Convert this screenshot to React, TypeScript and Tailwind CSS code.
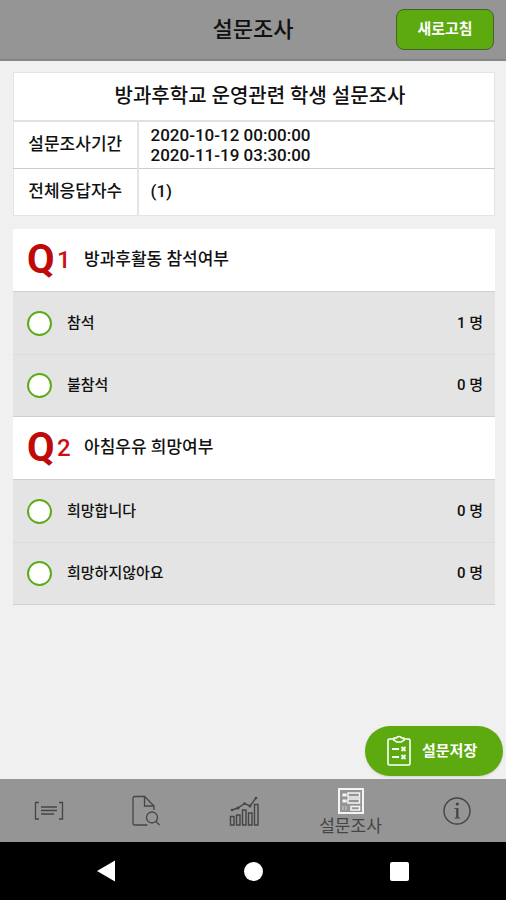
import React, { useState } from 'react';

interface Option {
  label: string;
  count: number;
}

interface Question {
  id: number;
  title: string;
  options: Option[];
}

const questions: Question[] = [
  {
    id: 1,
    title: '방과후활동 참석여부',
    options: [
      { label: '참석', count: 1 },
      { label: '불참석', count: 0 },
    ],
  },
  {
    id: 2,
    title: '아침우유 희망여부',
    options: [
      { label: '희망합니다', count: 0 },
      { label: '희망하지않아요', count: 0 },
    ],
  },
];

function ListIcon() {
  return (
    <svg viewBox="0 0 30 30" className="h-[30px] w-[30px]" fill="none" stroke="currentColor" strokeWidth="1.3">
      <path d="M5 6.500H1.500v16.500H5M25 6.500h3.500v16.500H25" />
      <path d="M7 11h16M7 14.500h16M7 18h13" />
    </svg>
  );
}

function FileSearchIcon() {
  return (
    <svg viewBox="0 0 30 32" className="h-8 w-[30px]" fill="none" stroke="currentColor" strokeWidth="1.3">
      <path d="M16.500 30H3.500a1.500 1.500 0 0 1-1.500-1.500V3A1.500 1.500 0 0 1 3.500 1.500h10L23 11v4" />
      <path d="M13.500 1.500V11H23" />
      <circle cx="21" cy="22.500" r="5.500" />
      <path d="M25 26.500L28.500 30" />
    </svg>
  );
}

function ChartIcon() {
  return (
    <svg viewBox="0 0 30 30" className="h-[30px] w-[30px]" fill="none" stroke="currentColor" strokeWidth="1.4">
      <path d="M1.500 20.500h3.500V29H1.500zM7.500 19H11v10H7.500zM13.500 14H17v15h-3.500zM19.500 17H23v12h-3.500zM25.500 8.500H29V29h-3.500z" />
      <path d="M3 14l6-2 6.500-4.500L21 10l6-8" />
      <g fill="currentColor" stroke="none">
        <circle cx="3" cy="14" r="1.300" />
        <circle cx="9" cy="12" r="1.500" />
        <circle cx="15.500" cy="7.500" r="1.300" />
        <circle cx="21" cy="10" r="1.500" />
        <circle cx="27" cy="2" r="1.300" />
      </g>
    </svg>
  );
}

function SurveyIcon() {
  return (
    <svg viewBox="0 0 26 26" className="h-[26px] w-[26px]" fill="none" stroke="#f4f4f4">
      <path d="M1 1h24v24H1z" strokeWidth="2" />
      <path d="M10 5h11.500v4H10zM10 11h11.500v4H10zM13 18.500h8.500V22H13z" strokeWidth="1.500" />
      <path d="M4.500 7h4M4.500 13h4" strokeWidth="3" />
      <path d="M10 7H8M10 13H8M5 18v4M8 18v4" strokeWidth="1" opacity="0.6" />
    </svg>
  );
}

function InfoIcon() {
  return (
    <svg viewBox="0 0 30 30" className="h-[30px] w-[30px]" fill="none" stroke="currentColor">
      <circle cx="15" cy="15" r="13" strokeWidth="1.400" />
      <path d="M12.500 12.500h3V22M12.500 22h5.500" strokeWidth="1.200" />
      <path d="M15.300 12v10" strokeWidth="2.200" />
      <circle cx="15.300" cy="8" r="1.600" fill="currentColor" stroke="none" />
    </svg>
  );
}

function ClipboardIcon() {
  return (
    <svg viewBox="0 0 26 32" className="h-8 w-[26px]" fill="none" stroke="white" strokeWidth="1.600" strokeLinejoin="round">
      <path d="M8 4H3.500A1.500 1.500 0 0 0 2 5.500v23A1.500 1.500 0 0 0 3.500 30h19a1.500 1.500 0 0 0 1.500-1.500v-23A1.500 1.500 0 0 0 22.500 4H18" />
      <path d="M8 3h2.500C11 1.500 12 1.500 13 1.500s2 0 2.500 1.500H18v2.500c-1 0-2 .5-2.500 1.500h-5C10 6 9 5.500 8 5.500z" />
      <path d="M6 14h7M6 22h7" strokeWidth="1.800" />
      <path d="M15.500 12l4 4M19.500 12l-4 4M15.500 20l4 4M19.500 20l-4 4" strokeWidth="1.800" />
    </svg>
  );
}

const tabs = [
  { name: '목록', icon: <ListIcon /> },
  { name: '검색', icon: <FileSearchIcon /> },
  { name: '통계', icon: <ChartIcon /> },
  { name: '설문조사', icon: <SurveyIcon /> },
  { name: '정보', icon: <InfoIcon /> },
];

function QuestionBlock({ question }: { question: Question }) {
  const [selected, setSelected] = useState('');

  return (
    <fieldset>
      <legend className="flex h-[63px] w-full items-center border-b border-[#cfcfcf] bg-white pl-[14px]">
        <span className="w-[30px] text-[40px] leading-none font-bold text-[#c00a0a]">Q</span>
        <span className="w-[27px] text-[24px] font-medium text-[#cc1010]">{question.id}</span>
        <span className="text-[17px] font-medium">{question.title}</span>
      </legend>
      {question.options.map((option) => (
        <label
          key={option.label}
          className="flex h-[63px] items-center border-b border-[#dcdcdc] bg-[#e4e4e4] pr-3 pl-[14px] text-[15px] font-medium last:h-[62px] last:border-[#cfcfcf]"
        >
          <input
            type="radio"
            name={`question-${question.id}`}
            value={option.label}
            checked={selected === option.label}
            onChange={(e) => setSelected(e.target.value)}
            className="mr-[15px] h-[25px] w-[25px] appearance-none rounded-full border-2 border-[#5bab1c] bg-white checked:bg-[#5bab1c]"
          />
          <span className="flex-1">{option.label}</span>
          <span>{option.count} 명</span>
        </label>
      ))}
    </fieldset>
  );
}

export default function App() {
  const [activeTab, setActiveTab] = useState('설문조사');

  return (
    <div className="flex min-h-screen flex-col bg-[#f0f0f0] font-[Roboto,'Noto_Sans_CJK_KR',sans-serif] text-[#111]">
      <header className="grid h-[61px] grid-cols-[1fr_auto_1fr] items-center border-b-2 border-[#858585] bg-[#959595] px-3">
        <h1 className="col-start-2 text-[22px] font-medium">설문조사</h1>
        <button
          type="button"
          className="h-[41px] w-[98px] justify-self-end rounded-lg border border-[#44622a] bg-[#5daa10] text-[15px] font-bold text-white"
        >
          새로고침
        </button>
      </header>

      <main className="relative flex flex-1 flex-col gap-[13px] pt-[11px] pr-[11px] pb-20 pl-[13px]">
        <table className="w-full border-collapse border border-[#e4e4e4] bg-white text-[17px]">
          <tbody>
            <tr className="h-12 border-b-2 border-[#e0e0e0]">
              <th colSpan={2} className="pl-3 text-[20px] font-medium">
                방과후학교 운영관련 학생 설문조사
              </th>
            </tr>
            <tr className="h-12 border-b border-[#cccccc]">
              <th className="w-[124px] border-r-2 border-[#e4e4e4] font-medium">설문조사기간</th>
              <td className="pl-3 leading-5 font-medium">
                2020-10-12 00:00:00
                <br />
                2020-11-19 03:30:00
              </td>
            </tr>
            <tr className="h-[47px]">
              <th className="border-r-2 border-[#e4e4e4] font-medium">전체응답자수</th>
              <td className="pl-3 font-medium">(1)</td>
            </tr>
          </tbody>
        </table>

        <form>
          {questions.map((question) => (
            <QuestionBlock key={question.id} question={question} />
          ))}
        </form>

        <button
          type="button"
          className="absolute right-[3px] bottom-[3px] flex h-[50px] w-[138px] items-center gap-[10px] rounded-full bg-[#5daa10] pl-[21px] text-[15px] font-bold text-white shadow"
        >
          <ClipboardIcon />
          설문저장
        </button>
      </main>

      <nav className="flex h-[63px] bg-[#959595] text-[#454545]">
        {tabs.map((tab) => (
          <button
            key={tab.name}
            type="button"
            aria-label={tab.name}
            onClick={() => setActiveTab(tab.name)}
            className={
              tab.name === activeTab
                ? 'flex w-[116px] flex-col items-center justify-center pt-1 text-[17px] leading-6'
                : 'flex flex-1 items-center justify-center'
            }
          >
            {tab.icon}
            {tab.name === activeTab && <span>{tab.name}</span>}
          </button>
        ))}
      </nav>

      <div className="flex h-[58px] items-center justify-center gap-[127px] bg-black">
        <button type="button" aria-label="뒤로">
          <svg viewBox="0 0 20 22" className="h-[22px] w-5" fill="white">
            <path d="M0 11L18 0.500v21z" />
          </svg>
        </button>
        <button type="button" aria-label="홈" className="h-[19px] w-[19px] rounded-full bg-white" />
        <button type="button" aria-label="최근 앱" className="h-[19px] w-[19px] rounded-xs bg-white" />
      </div>
    </div>
  );
}
